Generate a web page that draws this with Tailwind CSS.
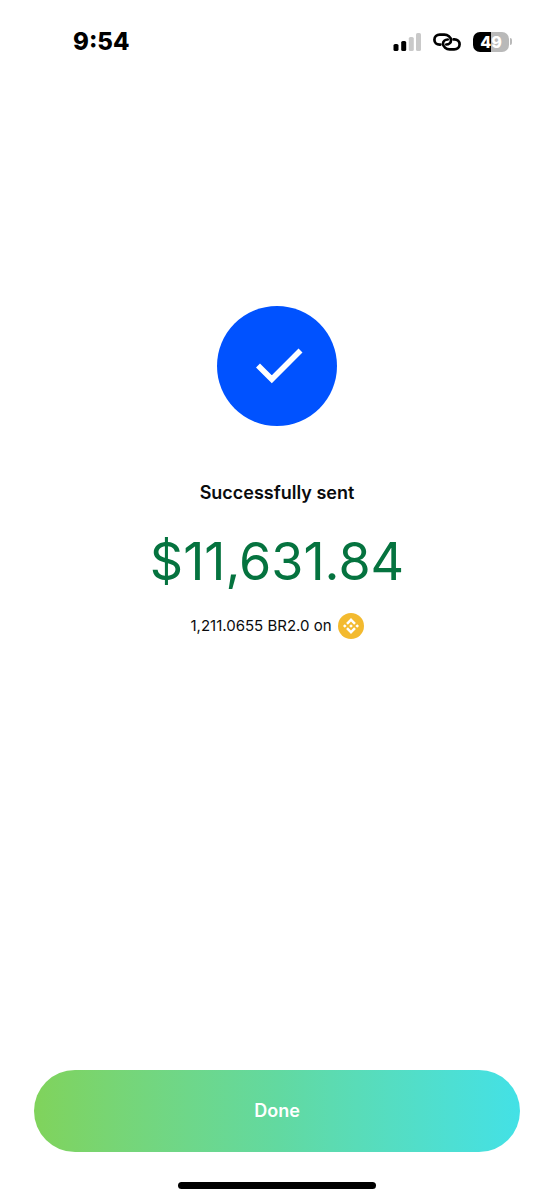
<!DOCTYPE html>
<html lang="en">
<head>
  <meta charset="UTF-8">
  <meta name="viewport" content="width=device-width, initial-scale=1.0">
  <title>Successfully sent</title>
  <script src="https://cdn.jsdelivr.net/npm/@tailwindcss/browser@4"></script>
</head>
<body class="bg-white font-['Inter',sans-serif] text-[#0a0b0d]">
  <div class="flex min-h-screen flex-col">

    <!-- Status bar -->
    <header class="flex h-[83px] items-center justify-between pl-[73px] pr-[42px] text-black">
      <time class="text-2xl font-extrabold">9:54</time>
      <div class="flex items-center gap-3">
        <svg class="h-[18px] w-7" viewBox="0 0 28 18" role="img" aria-label="Signal">
          <rect x="0.5" y="11" width="5" height="7" rx="1.6" fill="#000"/>
          <rect x="8.2" y="8" width="5" height="10" rx="1.6" fill="#000"/>
          <rect x="15.8" y="4" width="5" height="14" rx="1.6" fill="#c9c9c9"/>
          <rect x="23" y="0" width="5" height="18" rx="1.6" fill="#c9c9c9"/>
        </svg>
        <svg class="h-[18px] w-7" viewBox="0 0 28 18" fill="none" stroke="#000" stroke-width="2.7" stroke-linecap="round" role="img" aria-label="Hotspot">
          <path d="M7.4 11.6H6.6C3.6 11.6 1.4 9.6 1.4 6.7C1.4 3.8 3.8 1.6 6.8 1.6H11.4C14.6 1.6 18 4 18 7.2C18 9.8 15.8 11.5 13.3 11.5"/>
          <path d="M20.6 6.4H21.4C24.4 6.4 26.6 8.4 26.6 11.3C26.6 14.2 24.2 16.4 21.2 16.4H16.6C13.4 16.4 10 14 10 10.8C10 8.2 12.2 6.5 14.7 6.5"/>
        </svg>
        <div class="flex items-center gap-px">
          <div class="flex h-5 w-9 items-center justify-center rounded-[7px] bg-linear-to-r from-black from-50% to-[#b9b9b9] to-50% text-base font-extrabold text-white">49</div>
          <div class="h-[7px] w-0.5 rounded-r-full bg-[#b9b9b9]"></div>
        </div>
      </div>
    </header>

    <!-- Confirmation -->
    <main class="flex flex-1 flex-col items-center px-8 pt-[223px] text-center">
      <svg class="size-[120px]" viewBox="0 0 120 120" aria-hidden="true">
        <circle cx="60" cy="60" r="60" fill="#0052ff"/>
        <path d="M41 59.5L54.8 73.3L83.5 44.6" fill="none" stroke="#fff" stroke-width="5.6"/>
      </svg>
      <h1 class="mt-[53px] text-lg font-semibold">Successfully sent</h1>
      <p class="mt-4 text-[52px] leading-[78px] text-[#05733f]">$11,631.84</p>
      <p class="mt-3 flex items-center gap-1.5 text-[15px]">
        1,211.0655 BR2.0 on
        <svg class="size-[26px]" viewBox="0 0 26 26" role="img" aria-label="BNB Chain">
          <circle cx="13" cy="13" r="13" fill="#f3ba2f"/>
          <g fill="#fff">
            <path d="M9.9 11.7L13 8.6L16.1 11.7L17.9 9.9L13 5L8.1 9.9Z"/>
            <path d="M9.9 14.3L13 17.4L16.1 14.3L17.9 16.1L13 21L8.1 16.1Z"/>
            <path d="M13 11.2L14.8 13L13 14.8L11.2 13Z"/>
            <path d="M6.8 11.2L8.6 13L6.8 14.8L5 13Z"/>
            <path d="M19.2 11.2L21 13L19.2 14.8L17.4 13Z"/>
          </g>
        </svg>
      </p>
    </main>

    <footer class="flex flex-col items-center px-[34px] pb-[11px]">
      <button type="button" class="h-[82px] w-full cursor-pointer rounded-full bg-linear-to-r from-[#80d35b] via-[#62d9a0] to-[#43e1e6] text-lg font-semibold text-white">Done</button>
      <div class="mt-[30px] h-[7px] w-[198px] rounded-full bg-black"></div>
    </footer>

  </div>
</body>
</html>
